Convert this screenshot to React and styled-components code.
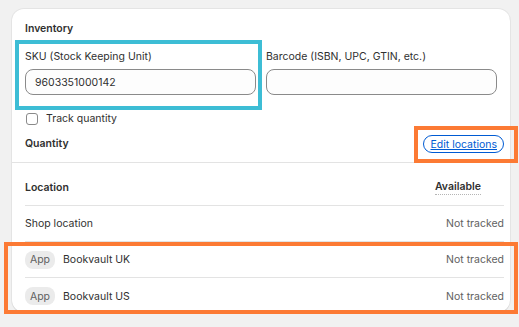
import React from 'react';
import styled, { createGlobalStyle } from 'styled-components';

const GlobalStyle = createGlobalStyle`
  html, body {
    margin: 0;
    padding: 0;
    background: #f1f1f1;
    font-family: Inter, "Noto Sans", sans-serif;
    color: #303030;
  }
`;

const Page = styled.div`
  position: relative;
  width: 519px;
  height: 327px;
  padding: 9px 9px 0 12px;
  box-sizing: border-box;
`;

const Card = styled.div`
  width: 498px;
  height: 303px;
  background: #fff;
  border-radius: 12px;
  box-shadow: 0 1px 0 rgba(26, 26, 26, 0.07), 0 0 0 1px rgba(0, 0, 0, 0.05);
  overflow: hidden;
`;

const Section = styled.div`
  padding: 12px 6px 0 13px;
`;

const Title = styled.h2`
  margin: 0;
  font-size: 10.5px;
  font-weight: 600;
  line-height: 16px;
`;

const Fields = styled.div`
  display: grid;
  grid-template-columns: 231px 231px;
  column-gap: 10px;
  margin-top: 12px;
`;

const Field = styled.div`
  display: flex;
  flex-direction: column;
  gap: 4px;
`;

const Label = styled.label`
  font-size: 10.5px;
  line-height: 16px;
`;

const Input = styled.input`
  box-sizing: border-box;
  height: 26px;
  width: 100%;
  border: 1px solid #8a8a8a;
  border-radius: 8px;
  background: #fdfdfd;
  padding: 0 9px;
  font-family: inherit;
  font-size: 10.5px;
  color: #303030;
  outline: none;
`;

const CheckRow = styled.label`
  display: flex;
  align-items: center;
  gap: 8px;
  margin-top: 16px;
  font-size: 10.5px;
  line-height: 16px;
`;

const Box = styled.span`
  box-sizing: border-box;
  width: 12px;
  height: 12px;
  margin-left: 1px;
  border: 1px solid #8a8a8a;
  border-radius: 3px;
`;

const QuantityRow = styled.div`
  display: flex;
  align-items: center;
  justify-content: space-between;
  height: 28px;
  margin-top: 3px;
`;

const LinkButton = styled.button`
  height: 18px;
  padding: 0 6px;
  border: 1px solid #005bd3;
  border-radius: 9px;
  background: #fff;
  color: #005bd3;
  font-family: inherit;
  font-size: 10.5px;
  text-decoration: underline;
  cursor: pointer;
`;

const Divider = styled.hr`
  margin: 4px 0 0;
  border: none;
  border-top: 1px solid #e3e3e3;
`;

const Table = styled.div`
  padding: 0 6px 0 13px;
`;

const Row = styled.div`
  display: flex;
  align-items: center;
  justify-content: space-between;
  height: ${p => (p.$head ? '43px' : '36px')};
  padding-top: ${p => (p.$head ? '6px' : '0')};
  box-sizing: border-box;
  border-bottom: ${p => (p.$last ? 'none' : '1px solid #e3e3e3')};
  font-size: 10.5px;
  font-weight: ${p => (p.$head ? 600 : 400)};
`;

const Name = styled.div`
  display: flex;
  align-items: center;
  gap: 8px;
`;

const Badge = styled.span`
  display: inline-flex;
  align-items: center;
  justify-content: center;
  width: 30px;
  height: 18px;
  border-radius: 8px;
  background: #ebebeb;
  color: #616161;
  font-size: 10.5px;
`;

const Status = styled.span`
  color: #616161;
`;

const Avail = styled.span`
  margin-right: 23px;
  border-bottom: 1px dotted #b5b5b5;
  line-height: 14px;
`;

const Highlight = styled.div`
  position: absolute;
  box-sizing: border-box;
  border: 4px solid ${p => p.$color};
  pointer-events: none;
`;

const rows = [
  { name: 'Shop location' },
  { name: 'Bookvault UK', app: true },
  { name: 'Bookvault US', app: true },
];

export default function App() {
  return (
    <Page>
      <GlobalStyle />
      <Card>
        <Section>
          <Title>Inventory</Title>
          <Fields>
            <Field>
              <Label>SKU (Stock Keeping Unit)</Label>
              <Input defaultValue="9603351000142" />
            </Field>
            <Field>
              <Label>Barcode (ISBN, UPC, GTIN, etc.)</Label>
              <Input />
            </Field>
          </Fields>
          <CheckRow>
            <Box />
            Track quantity
          </CheckRow>
          <QuantityRow>
            <Title>Quantity</Title>
            <LinkButton>Edit locations</LinkButton>
          </QuantityRow>
        </Section>
        <Divider />
        <Table>
          <Row $head>
            <span>Location</span>
            <Avail>Available</Avail>
          </Row>
          {rows.map((r, i) => (
            <Row key={r.name} $last={i === rows.length - 1}>
              <Name>
                {r.app && <Badge>App</Badge>}
                {r.name}
              </Name>
              <Status>Not tracked</Status>
            </Row>
          ))}
        </Table>
      </Card>
      <Highlight $color="#3dbdd5" style={{ left: 15, top: 40, width: 247, height: 70 }} />
      <Highlight $color="#fc7a34" style={{ left: 414, top: 126, width: 104, height: 37 }} />
      <Highlight $color="#fc7a34" style={{ left: 4, top: 242, width: 514, height: 72 }} />
    </Page>
  );
}
